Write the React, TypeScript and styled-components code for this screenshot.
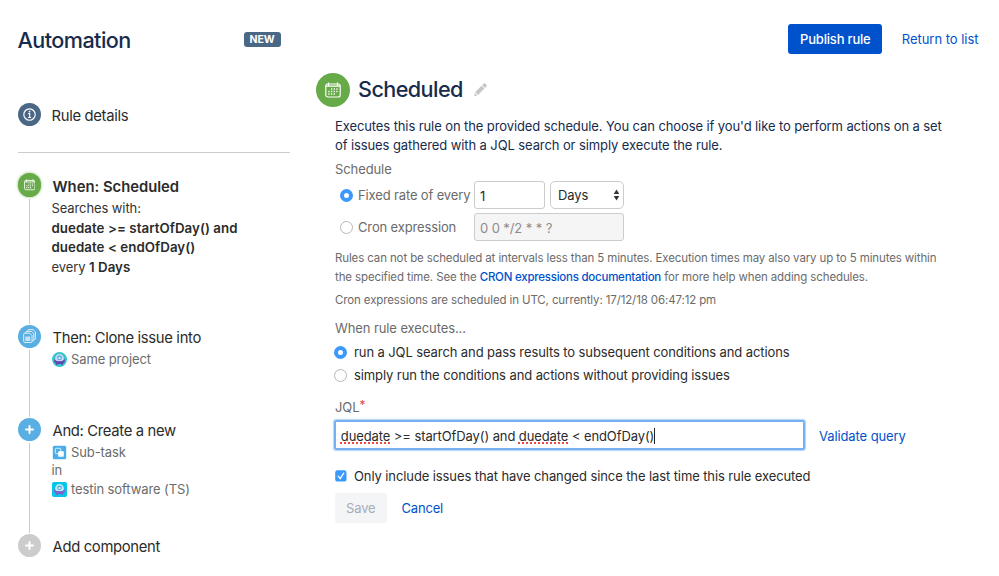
import React from "react";
import styled, { createGlobalStyle, css } from "styled-components";

const GlobalStyle = createGlobalStyle`
  *, *::before, *::after { box-sizing: border-box; }
  body {
    margin: 0;
    background: #fff;
    color: #2b2b2b;
    font: 400 13px/19px Inter, "Liberation Sans", sans-serif;
    letter-spacing: -0.1px;
  }
  h1, h2, p { margin: 0; font-weight: 400; }
  svg { display: block; flex: none; }
`;

const Page = styled.div`
  display: flex;
  width: 999px;
  height: 576px;
  overflow: hidden;
  background: #fff;
`;

const Sidebar = styled.aside`
  display: flex;
  flex-direction: column;
  flex: none;
  width: 290px;
  padding-left: 17.5px;
`;

const SidebarHeader = styled.header`
  display: flex;
  align-items: center;
  justify-content: space-between;
  height: 79px;
  padding-right: 9.5px;
`;

const headingText = css`
  color: #172b4d;
  font-size: 21.6px;
  font-weight: 500;
  line-height: 30px;
`;

const AppTitle = styled.h1`
  ${headingText}
  letter-spacing: -0.55px;
`;

const Lozenge = styled.span`
  display: flex;
  align-items: center;
  justify-content: center;
  width: 37px;
  height: 15px;
  border-radius: 3px;
  background: #4a6785;
  color: #fff;
  font-size: 10.5px;
  font-weight: 700;
  letter-spacing: -0.1px;
`;

const DetailsRow = styled.div`
  display: flex;
  align-items: center;
  height: 74px;
  padding-bottom: 2px;
  border-bottom: 1px solid #ccc;
`;

const Timeline = styled.div`
  display: flex;
  flex-direction: column;
  padding-top: 20px;
`;

const Step = styled.section<{ $height: number }>`
  display: flex;
  height: ${(p) => p.$height}px;
`;

const Rail = styled.div`
  display: flex;
  flex-direction: column;
  align-items: center;
  gap: 2px;
  width: 24px;
  padding-bottom: 1px;
`;

const RailLine = styled.div`
  flex: 1;
  width: 1px;
  background: #ccc;
`;

const Disc = styled.div<{ $color: string; $size?: number; $glow?: boolean }>`
  display: flex;
  align-items: center;
  justify-content: center;
  flex: none;
  width: ${(p) => p.$size ?? 23.5}px;
  height: ${(p) => p.$size ?? 23.5}px;
  border-radius: 50%;
  background: ${(p) => p.$color};
  box-shadow: ${(p) => (p.$glow ? "0 0 3px rgba(103, 171, 73, 0.8)" : "none")};
`;

const StepBody = styled.div`
  padding-left: 10px;
  white-space: nowrap;
  color: #2b2b2b;
`;

const StepTitle = styled.div<{ $strong?: boolean }>`
  height: 26px;
  padding-left: 1px;
  font-size: 14.8px;
  line-height: ${(p) => (p.$strong ? 28 : 26)}px;
  font-weight: ${(p) => (p.$strong ? 600 : 400)};
  letter-spacing: ${(p) => (p.$strong ? "0" : "-0.32px")};
`;

const DetailsLabel = styled(StepTitle)`
  padding-left: 10.5px;
  line-height: 28px;
`;

const StepLine = styled.div<{ $muted?: boolean }>`
  display: flex;
  align-items: center;
  height: ${(p) => (p.$muted ? 18.8 : 19.5)}px;
  white-space: pre;
  color: ${(p) => (p.$muted ? "#6b6b6b" : "#333")};

  svg { margin-right: 4.5px; }
  b { font-weight: 600; font-size: 13.3px; letter-spacing: 0.05px; color: #2b2b2b; }
`;

const StepMeta = styled.div`
  margin-top: -0.8px;
`;

const Main = styled.main`
  flex: 1;
  padding-left: 26px;
`;

const Actions = styled.div`
  display: flex;
  align-items: center;
  justify-content: flex-end;
  gap: 19.5px;
  height: 73px;
  padding: 5px 20.5px 0 0;
`;

const PrimaryButton = styled.button`
  width: 94px;
  height: 30px;
  padding: 0;
  border: 0;
  border-radius: 3px;
  background: #0052cc;
  color: #fff;
  font: 500 13px/30px Inter, sans-serif;
  letter-spacing: -0.19px;
`;

const Link = styled.a<{ $spacing?: number }>`
  color: #0052cc;
  letter-spacing: ${(p) => p.$spacing ?? -0.1}px;
  text-decoration: none;
`;

const HeadingRow = styled.div`
  display: flex;
  align-items: center;
  height: 34px;
`;

const PanelTitle = styled.h2`
  ${headingText}
  margin: 0 11px 2px 8px;
  letter-spacing: -0.57px;
`;

const Panel = styled.div`
  padding: 10px 0 0 19px;
  white-space: nowrap;
`;

const Description = styled.p`
  color: #172b4d;
`;

const Label = styled.div<{ $top: number }>`
  display: flex;
  height: 19px;
  margin-top: ${(p) => p.$top}px;
  color: #6b6b6b;
`;

const Required = styled.span`
  margin-top: -3px;
  color: #e2483d;
  font-size: 12px;
`;

const FieldRows = styled.div`
  display: grid;
  gap: 4px;
  padding: 2px 0 0 4.5px;
`;

const FieldRow = styled.div`
  display: flex;
  align-items: center;
  height: 28px;
  color: #6b6b6b;
`;

const FieldLabel = styled.span`
  width: 116px;
  margin-left: 5.5px;
  letter-spacing: -0.14px;
`;

const Radio = styled.span<{ $checked?: boolean }>`
  flex: none;
  width: 13px;
  height: 13px;
  border: ${(p) => (p.$checked ? "4.5px solid #3b99fc" : "1px solid #b8b8b8")};
  border-radius: 50%;
  background: #fff;
`;

const NumberBox = styled.div`
  width: 71px;
  height: 28px;
  padding-left: 5px;
  border: 1px solid #ccc;
  border-radius: 3px;
  background: #fff;
  color: #2b2b2b;
  line-height: 28px;
`;

const SelectBox = styled.div`
  display: flex;
  align-items: center;
  justify-content: space-between;
  width: 74px;
  height: 28px;
  margin-left: 4.5px;
  padding: 0 3px 0 7.5px;
  border: 1px solid #ccc;
  border-radius: 5px;
  color: #2b2b2b;
`;

const DisabledBox = styled(NumberBox)`
  width: 149.5px;
  background: #f5f5f5;
  color: #8c8c8c;
`;

const Help = styled.p<{ $top: number }>`
  margin-top: ${(p) => p.$top}px;
  color: #6b6b6b;
  font-size: 11.5px;
  line-height: 19px;
  letter-spacing: -0.122px;
`;

const HelpLink = styled(Link)`
  font-weight: 500;
`;

const OptionRow = styled.div<{ $height: number; $top?: number }>`
  display: flex;
  align-items: center;
  gap: 7px;
  height: ${(p) => p.$height}px;
  margin: ${(p) => p.$top ?? 0}px 0 0 -1px;
`;

const QueryRow = styled.div`
  display: flex;
  align-items: center;
  gap: 14px;
  margin: 3px 0 0 -1px;
`;

const QueryInput = styled.div`
  display: flex;
  align-items: center;
  width: 471px;
  height: 30px;
  padding: 2px 0 0 4.8px;
  border: 2px solid #76b0f3;
  border-radius: 2px;
  box-shadow: 0 0 1px 1px #b5d5fa;
  white-space: pre;
`;

const ValidateLink = styled(Link)`
  padding-top: 3px;
`;

const Misspelled = styled.span`
  text-decoration: underline dotted #ee4a43 2px;
  text-underline-offset: 2px;
  text-decoration-skip-ink: none;
`;

const Caret = styled.span`
  width: 1px;
  height: 16px;
  background: #222;
`;

const ButtonRow = styled.div`
  display: flex;
  align-items: center;
  gap: 15px;
  margin-top: 2px;
`;

const SaveButton = styled(PrimaryButton)`
  width: 51.5px;
  background: #f4f5f7;
  color: #a5adba;
  font-weight: 400;
`;

const CalendarIcon = ({ size }: { size: number }) => (
  <svg width={size} height={size} viewBox="0 0 16 16" fill="none" stroke="#fff">
    <rect x="0.8" y="2" width="14.4" height="13" rx="2" strokeWidth="1.15" />
    <path d="M0.8 4.1h14.4M3.5.5v3.2M12.5.5v3.2" strokeWidth="1.2" />
    <path d="M6 6.9h7M3.3 9.5h9.7M3.3 12h7" strokeWidth="1.5" strokeDasharray="1.3 1.35" />
  </svg>
);

const InfoIcon = () => (
  <svg width="13" height="13" viewBox="0 0 13 13" fill="none" stroke="#fff">
    <circle cx="6.5" cy="6.5" r="5.7" strokeWidth="1.15" />
    <path d="M5.3 5.6h1.4v3.8M5.1 9.5h3" strokeWidth="1.1" />
    <circle cx="6.5" cy="3.6" r=".85" fill="#fff" stroke="none" />
  </svg>
);

const CopyIcon = () => (
  <svg width="13" height="14" viewBox="0 0 13 14" fill="none" stroke="#fff" strokeWidth=".8">
    <path d="M4.8 2.400V1.700c0-.7.4-1.100 1.100-1.100h4.200l2.300 2.200v6.700c0 .7-.4 1.100-1.100 1.100h-.4" />
    <path d="M2.700 4.200v-.7c0-.7.4-1.100 1.100-1.100h4.800l2.200 2.200v6.300c0 .7-.4 1.100-1.100 1.100h-.7" />
    <path d="M.7 5.300c0-.7.4-1.100 1.100-1.100h5l2.200 2.200v6c0 .7-.4 1.100-1.100 1.100H1.800c-.7 0-1.100-.4-1.100-1.100Z" />
    <path d="M2.300 7.500h5v4.500h-5Z" fill="#fff" fillOpacity=".65" stroke="none" />
  </svg>
);

const PlusIcon = () => (
  <svg width="9" height="9" viewBox="0 0 9 9" stroke="#fff" strokeWidth="2" strokeLinecap="round">
    <path d="M4.5 1v7M1 4.5h7" />
  </svg>
);

const PencilIcon = () => (
  <svg width="13" height="14" viewBox="0 0 13 14" fill="#c7c7c7">
    <path d="M8.1 2.100 9.700.6q.8-.7 1.500 0l1.300 1.300q.7.700 0 1.500l-1.600 1.600ZM7.500 2.700l2.900 2.900-6.300 6.300-2.900-2.900ZM.8 9.800l2.600 2.600-3 .9Z" />
  </svg>
);

const ProjectAvatar = ({ round }: { round?: boolean }) => (
  <svg width="15" height="15" viewBox="0 0 15 15">
    <rect width="15" height="15" rx={round ? 7.5 : 2} fill={round ? "#36c5c8" : "#00c7e6"} />
    <path d="M3.200 9V6.300a4.300 4.300 0 0 1 8.600 0V9Z" fill={round ? "#c9d8f7" : "#c5ecf7"} />
    <circle cx="7.5" cy="5.700" r="2.300" fill="#4a9fdd" />
    <circle cx="7.5" cy="5.900" r="1.200" fill="#d9f0fa" />
    <path d="M2.200 7c.9.300 1.400 1.600 2.600 1.900 1.700.500 3.700.500 5.400 0C11.400 8.600 11.900 7.300 12.800 7c.5 2.300-.3 3.900-1.900 4.700v1.200H9.400v-.8H5.600v.8H4.100v-1.200C2.500 10.900 1.700 9.300 2.200 7Z" fill={round ? "#6746b5" : "#8061d0"} />
  </svg>
);

const SubtaskIcon = () => (
  <svg width="15" height="15" viewBox="0 0 15 15">
    <rect x=".8" y=".8" width="13.4" height="13.4" rx="1.5" fill="#4bade8" />
    <rect x="3.300" y="3.300" width="5.400" height="5.400" rx=".8" fill="none" stroke="#d8effc" strokeWidth="1" />
    <rect x="6.200" y="6.200" width="5.600" height="5.600" rx=".8" fill="#fff" />
  </svg>
);

const SelectArrows = () => (
  <svg width="7" height="12" viewBox="0 0 7 12" fill="#333">
    <path d="M3.500 .5 6.300 5H.7ZM3.500 11.500 6.300 7H.7Z" />
  </svg>
);

const Checkbox = () => (
  <svg width="13" height="12" viewBox="0 0 13 12">
    <rect x="1.200" y=".2" width="11.300" height="11.400" rx="2.200" fill="#3b99fc" />
    <path d="m4.200 6.200 2 2.400 3.600-5.600" fill="none" stroke="#fff" strokeWidth="1.300" strokeLinecap="round" />
  </svg>
);

export default function App() {
  return (
    <>
      <GlobalStyle />
      <Page>
        <Sidebar>
          <SidebarHeader>
            <AppTitle>Automation</AppTitle>
            <Lozenge>NEW</Lozenge>
          </SidebarHeader>
          <DetailsRow>
            <Disc $color="#4a6785"><InfoIcon /></Disc>
            <DetailsLabel>Rule details</DetailsLabel>
          </DetailsRow>
          <Timeline>
            <Step $height={151.5}>
              <Rail>
                <Disc $color="#67ab49" $glow><CalendarIcon size={11.5} /></Disc>
                <RailLine />
              </Rail>
              <StepBody>
                <StepTitle $strong>When: Scheduled</StepTitle>
                <StepLine>Searches with:</StepLine>
                <StepLine><b>duedate &gt;= startOfDay() and</b></StepLine>
                <StepLine><b>duedate &lt; endOfDay()</b></StepLine>
                <StepLine>{"every "}<b>1 Days</b></StepLine>
              </StepBody>
            </Step>
            <Step $height={93}>
              <Rail>
                <Disc $color="#59afe1"><CopyIcon /></Disc>
                <RailLine />
              </Rail>
              <StepBody>
                <StepTitle>Then: Clone issue into</StepTitle>
                <StepMeta>
                  <StepLine $muted><ProjectAvatar round />Same project</StepLine>
                </StepMeta>
              </StepBody>
            </Step>
            <Step $height={116}>
              <Rail>
                <Disc $color="#59afe1"><PlusIcon /></Disc>
                <RailLine />
              </Rail>
              <StepBody>
                <StepTitle>And: Create a new</StepTitle>
                <StepMeta>
                  <StepLine $muted><SubtaskIcon />Sub-task</StepLine>
                  <StepLine $muted>in</StepLine>
                  <StepLine $muted><ProjectAvatar />testin software (TS)</StepLine>
                </StepMeta>
              </StepBody>
            </Step>
            <Step $height={26}>
              <Rail>
                <Disc $color="#ccc"><PlusIcon /></Disc>
              </Rail>
              <StepBody>
                <StepTitle>Add component</StepTitle>
              </StepBody>
            </Step>
          </Timeline>
        </Sidebar>
        <Main>
          <Actions>
            <PrimaryButton>Publish rule</PrimaryButton>
            <Link $spacing={-0.03}>Return to list</Link>
          </Actions>
          <HeadingRow>
            <Disc $color="#67ab49" $size={34}><CalendarIcon size={16} /></Disc>
            <PanelTitle>Scheduled</PanelTitle>
            <PencilIcon />
          </HeadingRow>
          <Panel>
            <Description>
              Executes this rule on the provided schedule. You can choose if you'd like to perform actions on a set
              <br />
              of issues gathered with a JQL search or simply execute the rule.
            </Description>
            <Label $top={5}>Schedule</Label>
            <FieldRows>
              <FieldRow>
                <Radio $checked />
                <FieldLabel>Fixed rate of every</FieldLabel>
                <NumberBox>1</NumberBox>
                <SelectBox>Days<SelectArrows /></SelectBox>
              </FieldRow>
              <FieldRow>
                <Radio />
                <FieldLabel>Cron expression</FieldLabel>
                <DisabledBox>0 0 */2 * * ?</DisabledBox>
              </FieldRow>
            </FieldRows>
            <Help $top={8}>
              Rules can not be scheduled at intervals less than 5 minutes. Execution times may also vary up to 5 minutes within
              <br />
              the specified time. See the <HelpLink $spacing={-0.24}>CRON expressions documentation</HelpLink> for more help when adding schedules.
            </Help>
            <Help $top={4}>Cron expressions are scheduled in UTC, currently: 17/12/18 06:47:12 pm</Help>
            <Label $top={9}>When rule executes...</Label>
            <OptionRow $height={28}><Radio $checked />run a JQL search and pass results to subsequent conditions and actions</OptionRow>
            <OptionRow $height={19}><Radio />simply run the conditions and actions without providing issues</OptionRow>
            <Label $top={13}>JQL<Required>*</Required></Label>
            <QueryRow>
              <QueryInput>
                <Misspelled>duedate</Misspelled>{" >= startOfDay() and "}<Misspelled>duedate</Misspelled>{" < endOfDay()"}<Caret />
              </QueryInput>
              <ValidateLink>Validate query</ValidateLink>
            </QueryRow>
            <OptionRow $height={30} $top={11}>
              <Checkbox />
              Only include issues that have changed since the last time this rule executed
            </OptionRow>
            <ButtonRow>
              <SaveButton>Save</SaveButton>
              <Link $spacing={-0.18}>Cancel</Link>
            </ButtonRow>
          </Panel>
        </Main>
      </Page>
    </>
  );
}
